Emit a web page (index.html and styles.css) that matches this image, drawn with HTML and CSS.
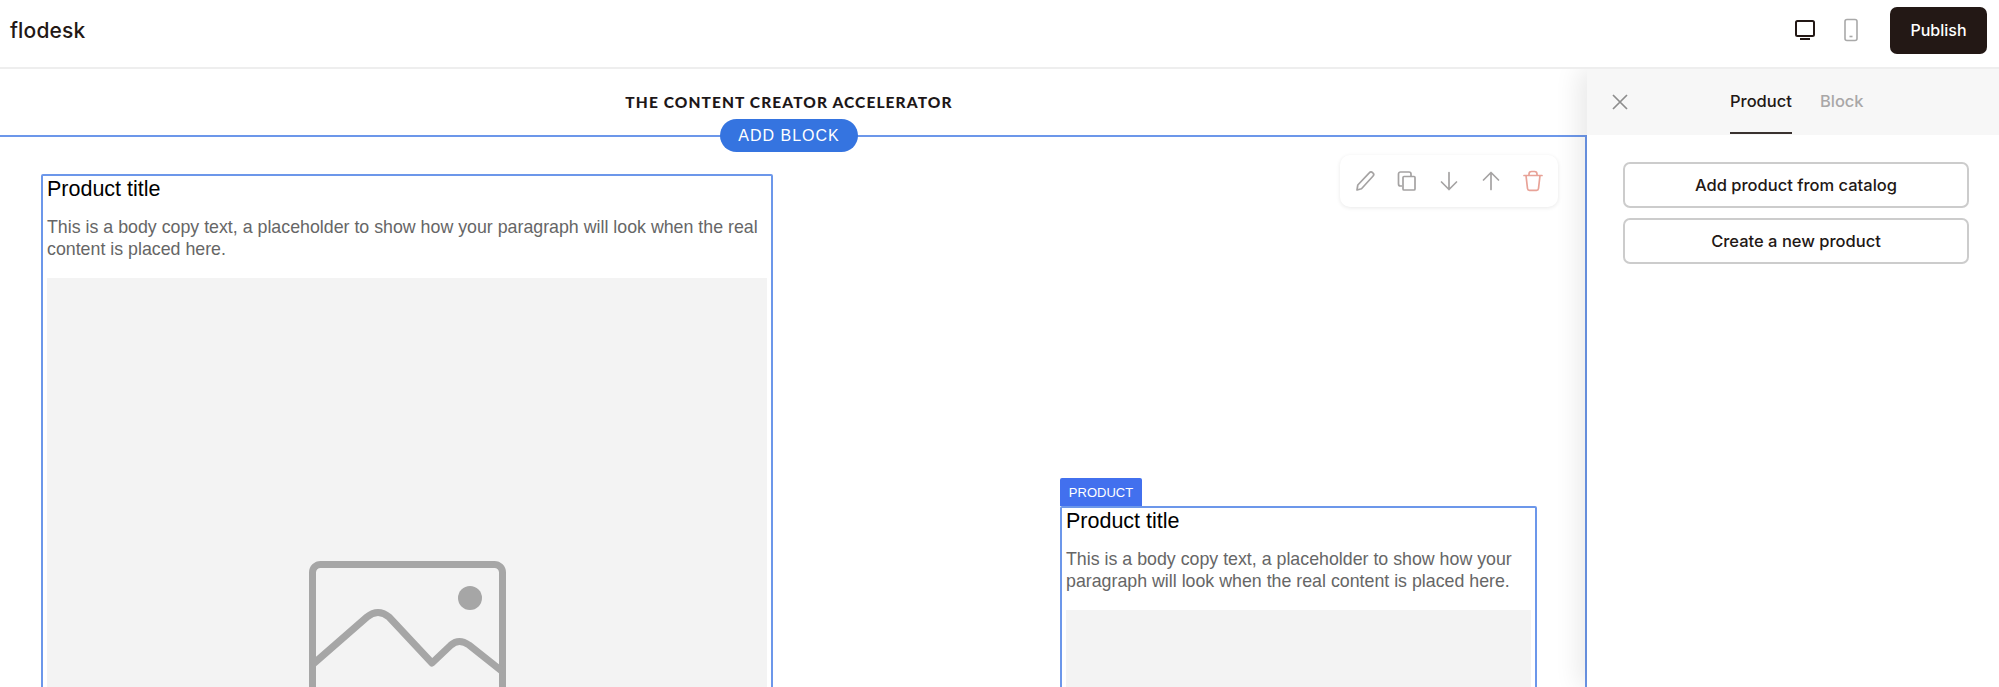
FILE: index.html
```html
<!DOCTYPE html>
<html lang="en">
<head>
<meta charset="utf-8">
<title>flodesk</title>
<link rel="stylesheet" href="styles.css">
</head>
<body>
<div class="app">
  <header class="topbar">
    <div class="logo">flodesk</div>
    <div class="top-actions">
      <svg class="device" width="24" height="24" viewBox="0 0 24 24" fill="none" stroke="#231815" stroke-width="2"><rect x="3" y="3" width="18" height="15" rx="1.5"/><path d="M7 21h10"/></svg>
      <svg class="device" width="24" height="24" viewBox="0 0 24 24" fill="none" stroke="#a9a9a9" stroke-width="1.6"><rect x="6" y="1.5" width="12" height="21" rx="2"/><path d="M10.5 18.5h3"/></svg>
      <button class="publish">Publish</button>
    </div>
  </header>
  <div class="workspace">
    <main class="canvas">
      <div class="page-title">THE CONTENT CREATOR ACCELERATOR</div>
      <section class="block">
        <button class="add-block">ADD BLOCK</button>
        <div class="toolbar">
          <svg width="24" height="24" viewBox="0 0 24 24" fill="none" stroke="#a5a3a3" stroke-width="1.7" stroke-linejoin="round"><path d="M4 21l.8-5L16.5 3.6a2 2 0 0 1 3 0l.6.6a2 2 0 0 1 0 2.8L8.5 19.7 4 21z"/></svg>
          <svg width="24" height="24" viewBox="0 0 24 24" fill="none" stroke="#a5a3a3" stroke-width="1.7" stroke-linejoin="round"><path d="M7 17H5.5A2 2 0 0 1 3.500 15V5a2 2 0 0 1 2-2H14a2 2 0 0 1 2 2v2"/><rect x="8" y="7.500" width="12" height="13.500" rx="1"/></svg>
          <svg width="24" height="24" viewBox="0 0 24 24" fill="none" stroke="#a5a3a3" stroke-width="1.7" stroke-linecap="round" stroke-linejoin="round"><path d="M12 3.500v17M4.500 13l7.500 7.500 7.500-7.500"/></svg>
          <svg width="24" height="24" viewBox="0 0 24 24" fill="none" stroke="#a5a3a3" stroke-width="1.7" stroke-linecap="round" stroke-linejoin="round"><path d="M12 20.500v-17M4.500 11L12 3.500l7.500 7.500"/></svg>
          <svg width="24" height="24" viewBox="0 0 24 24" fill="none" stroke="#e8a297" stroke-width="1.700" stroke-linecap="round" stroke-linejoin="round"><path d="M3 6.500h18M8 6.500V5a2.500 2.500 0 0 1 2.500-2.500h3A2.500 2.500 0 0 1 16 5v1.500M5 6.500l1.500 13a2 2 0 0 0 2 1.800h7a2 2 0 0 0 2-1.800l1.500-13"/></svg>
        </div>
        <div class="columns">
          <article class="card card-large">
            <h2 class="card-title">Product title</h2>
            <p class="card-body">This is a body copy text, a placeholder to show how your paragraph will look when the real content is placed here.</p>
            <div class="placeholder">
              <svg width="197" height="154" viewBox="0 0 197 154" fill="none" stroke="#a6a6a6" stroke-width="7" stroke-linejoin="round"><rect x="3.500" y="3.500" width="190" height="147" rx="8"/><circle cx="161" cy="37" r="12" fill="#a6a6a6" stroke="none"/><path d="M3 104L58 56Q69 47 80 56L123 102L142 84Q150 77 160 84L194 111"/></svg>
            </div>
          </article>
          <div class="side">
            <div class="tag">PRODUCT</div>
            <article class="card card-small">
              <h2 class="card-title">Product title</h2>
              <p class="card-body">This is a body copy text, a placeholder to show how your paragraph will look when the real content is placed here.</p>
              <div class="placeholder"></div>
            </article>
          </div>
        </div>
      </section>
    </main>
    <aside class="panel">
      <div class="panel-head">
        <svg class="close" width="20" height="20" viewBox="0 0 20 20" fill="none" stroke="#8d8d8d" stroke-width="1.700"><path d="M3 3l14 14M17 3L3 17"/></svg>
        <div class="tab tab-active">Product</div>
        <div class="tab">Block</div>
      </div>
      <div class="panel-body">
        <button class="panel-btn">Add product from catalog</button>
        <button class="panel-btn">Create a new product</button>
      </div>
    </aside>
  </div>
</div>
</body>
</html>
```
FILE: styles.css
```css
* { box-sizing: border-box; }
html, body { margin: 0; height: 687px; overflow: hidden; background: #fff; }
body { font-family: "Inter", "Liberation Sans", sans-serif; color: #231815; }
.app { height: 687px; overflow: hidden; display: flex; flex-direction: column; }

.topbar {
  height: 69px; flex: none; display: flex; align-items: center; justify-content: space-between;
  padding: 0 12px 7px 10px; border-bottom: 2px solid #eeeeee; position: relative; z-index: 3; background: #fff;
}
.logo { font-size: 21px; font-weight: 500; letter-spacing: .15px; }
.top-actions { display: flex; align-items: center; }
.device { margin-right: 22px; }
.device + .device { margin-right: 27px; }
.publish {
  width: 97px; height: 47px; border: 0; border-radius: 7px; background: #231815; color: #fff;
  font: 500 16px "Inter", sans-serif;
}

.workspace { flex: 1; display: flex; min-height: 0; }
.canvas { width: 1587px; flex: none; display: flex; flex-direction: column; }
.page-title {
  height: 66px; flex: none; display: flex; align-items: center; justify-content: center; padding-right: 9px;
  font: 900 15.500px "Lato", sans-serif; letter-spacing: 1.100px; color: #1d1718;
}
.block {
  flex: 1; position: relative; border-top: 2px solid #6c97ea; border-right: 2px solid #6c97ea;
}
.add-block {
  position: absolute; left: 720px; top: -18px; width: 138px; height: 33px; border: 0; border-radius: 17px; padding: 0;
  background: #3574e0; color: #fff; font: 400 16px "Liberation Sans", sans-serif; letter-spacing: 1px;
}
.toolbar {
  position: absolute; left: 1340px; top: 18px; width: 218px; height: 52px; padding: 0 13px;
  display: flex; align-items: center; justify-content: space-between;
  background: #fff; border-radius: 10px; box-shadow: 0 1px 4px rgba(0,0,0,.09);
}
.columns { display: flex; align-items: flex-start; padding: 37px 0 0 41px; }
.card { border: 2px solid #6c97ea; border-radius: 2px; padding: 0 4px; background: #fff; }
.card-large { width: 732px; }
.card-small { width: 477px; }
.side { margin: 304px 0 0 287px; }
.card-title { margin: 0; font: 400 21.500px/27px "Liberation Sans", sans-serif; color: #000; }
.card-body { margin: 13px 0 18px; font: 400 17.800px/22px "Liberation Sans", sans-serif; color: #666; }
.placeholder { aspect-ratio: 1; background: #f3f3f3; display: flex; align-items: center; justify-content: center; }
.tag {
  width: 82px; height: 28px; background: #4270ee; color: #fff; border-radius: 2px 2px 0 0;
  display: flex; align-items: center; justify-content: center; font: 400 13px "Liberation Sans", sans-serif;
}

.panel { flex: 1; position: relative; z-index: 2; background: #fff; box-shadow: -8px 0 24px rgba(0,0,0,.09); }
.panel-head { height: 66px; background: #f7f7f7; display: flex; padding-left: 23px; }
.close { margin: 23px 100px 0 0; }
.tab { height: 65px; padding-top: 22px; margin-right: 28px; font-size: 16.500px; font-weight: 500; color: #a9a7a7; }
.tab-active { color: #231815; border-bottom: 2px solid #3a3230; }
.panel-body { padding: 27px 30px 0 36px; display: flex; flex-direction: column; gap: 10px; }
.panel-btn {
  height: 46px; border: 2px solid #cccccc; border-radius: 7px; background: #fff; color: #231815;
  font: 500 16.500px "Inter", sans-serif;
}
```
